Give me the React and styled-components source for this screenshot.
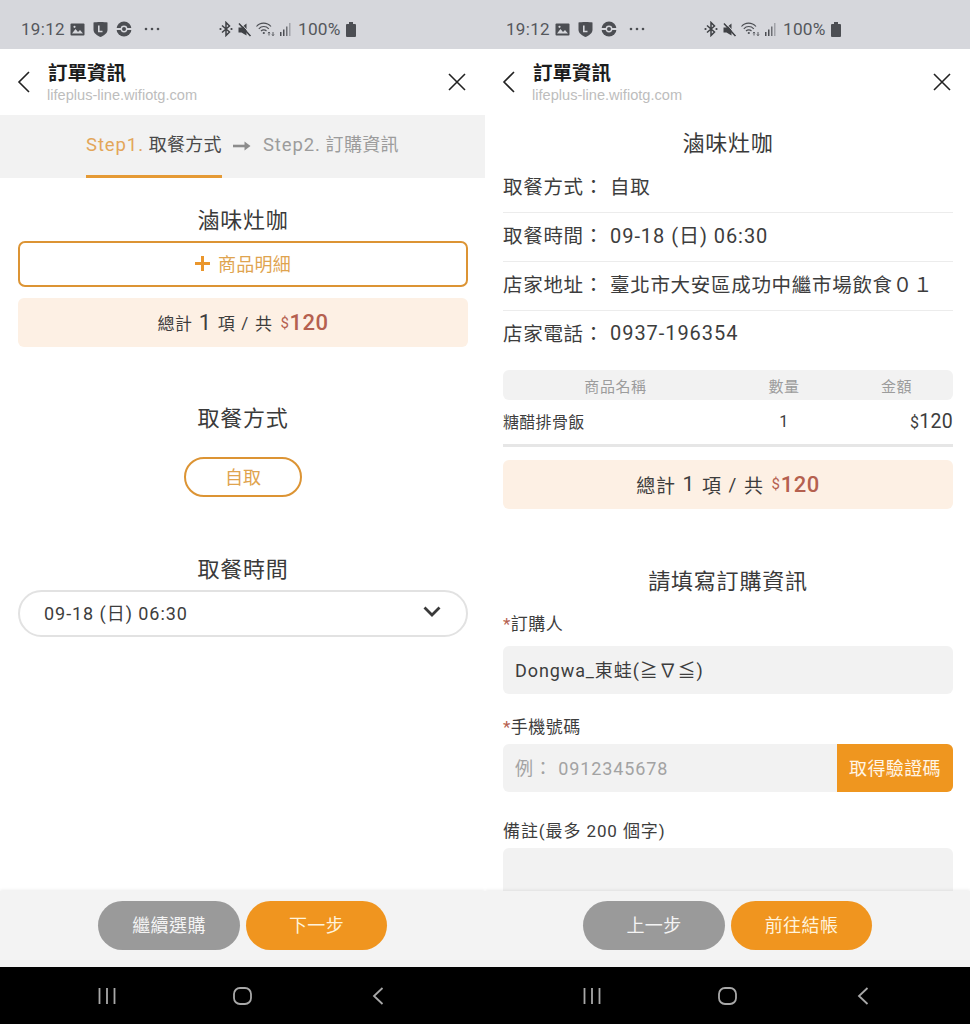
import React from 'react';
import styled, { createGlobalStyle } from 'styled-components';

const GlobalStyle = createGlobalStyle`
  html, body {
    margin: 0;
    padding: 0;
    background: #fff;
  }
  body {
    font-family: Roboto, "Noto Sans CJK TC", sans-serif;
    color: #333;
  }
  * {
    box-sizing: border-box;
  }
`;

const Screens = styled.div`
  display: flex;
  width: 970px;
  height: 1024px;
  overflow: hidden;
`;

const Phone = styled.div`
  width: 485px;
  height: 1024px;
  display: flex;
  flex-direction: column;
  background: #fff;
  overflow: hidden;
`;

const StatusBar = styled.div`
  height: 49px;
  flex: none;
  background: #d6d7dc;
  display: flex;
  align-items: center;
  padding: 9px 0 0 21px;
  color: #55575c;
`;

const Clock = styled.span`
  font-size: 17px;
  width: 49px;
  letter-spacing: 0.3px;
`;

const StatusLeft = styled.div`
  display: flex;
  align-items: center;
  gap: 8px;
  width: 149px;
  svg {
    display: block;
  }
`;

const StatusRight = styled.div`
  display: flex;
  align-items: center;
  gap: 4px;
  svg {
    display: block;
  }
`;

const Percent = styled.span`
  font-size: 17.3px;
  letter-spacing: 0.2px;
  margin-left: 2px;
`;

const Header = styled.div`
  height: 66px;
  flex: none;
  display: flex;
  align-items: center;
  padding: 0 19px 0 17px;
`;

const HeaderText = styled.div`
  flex: 1;
  margin-left: 18px;
  padding-top: 1px;
`;

const HeaderTitle = styled.div`
  font-size: 19.5px;
  line-height: 25px;
  font-weight: 700;
  color: #1c1c1c;
`;

const HeaderUrl = styled.div`
  font-family: "Liberation Sans", sans-serif;
  font-size: 14.6px;
  line-height: 19px;
  color: #bdbdbd;
  margin-left: -1px;
`;

const Steps = styled.div`
  height: 63px;
  flex: none;
  background: #f2f2f2;
  display: flex;
  padding-left: 86px;
`;

const Step = styled.div`
  height: 63px;
  padding-top: 18px;
  font-size: 18px;
  line-height: 24px;
  letter-spacing: 0.3px;
  white-space: nowrap;
  color: ${(p) => (p.$active ? '#4a4a4a' : '#9c9c9c')};
  border-bottom: ${(p) => (p.$active ? '3px solid #e59a35' : 'none')};
`;

const StepNo = styled.span`
  font-size: 18.5px;
  letter-spacing: 0.9px;
  color: ${(p) => (p.$active ? '#e3a65a' : '#9c9c9c')};
`;

const StepArrow = styled.svg`
  margin: 25px 12px 0 11px;
  flex: none;
`;

const Body = styled.div`
  flex: 1;
  min-height: 0;
  overflow: hidden;
  padding: 0 17px 0 18px;
  display: flex;
  flex-direction: column;
  > * {
    flex: none;
  }
`;

const Heading = styled.div`
  font-size: 22px;
  line-height: 30px;
  text-align: center;
  color: #3a3a3a;
  letter-spacing: 0.8px;
  margin-top: ${(p) => p.$top || 0}px;
`;

const DetailButton = styled.div`
  height: 46px;
  margin-top: 5px;
  padding-bottom: 2px;
  border: 2px solid #dc9434;
  border-radius: 7px;
  display: flex;
  align-items: center;
  justify-content: center;
  gap: 8px;
  font-size: 18px;
  letter-spacing: 0.2px;
  color: #dfa44f;
`;

const TotalBox = styled.div`
  height: 49px;
  margin-top: ${(p) => p.$top}px;
  padding-bottom: ${(p) => (p.$large ? 1 : 0)}px;
  background: #fdf0e4;
  border-radius: 6px;
  display: flex;
  align-items: center;
  justify-content: center;
  font-size: ${(p) => (p.$large ? 19 : 17)}px;
  letter-spacing: 0.6px;
  color: #3d3d3d;
`;

const TotalCount = styled.span`
  font-size: ${(p) => (p.$large ? 21 : 22)}px;
  margin: 0 ${(p) => (p.$large ? 7 : 6)}px;
`;

const Slash = styled.span`
  margin: 0 ${(p) => (p.$large ? 7 : 6)}px;
`;

const Currency = styled.span`
  margin-left: 8px;
  font-size: 15px;
  color: #b5604f;
`;

const Amount = styled.span`
  font-size: 22px;
  font-weight: 500;
  letter-spacing: 0.5px;
  color: #b5604f;
`;

const PillRow = styled.div`
  display: flex;
  justify-content: center;
  margin-top: 23px;
`;

const Pill = styled.div`
  width: 118px;
  height: 40px;
  padding-bottom: 3px;
  border: 2px solid #dc9434;
  border-radius: 20px;
  display: flex;
  align-items: center;
  justify-content: center;
  font-size: 18px;
  color: #dfa44f;
`;

const SelectBox = styled.div`
  height: 47px;
  margin-top: 5px;
  padding: 0 25px 4px 24px;
  border: 2px solid #e2e2e2;
  border-radius: 24px;
  display: flex;
  align-items: center;
  justify-content: space-between;
  font-size: 18px;
  letter-spacing: 0.95px;
  color: #3d3d3d;
`;

const InfoList = styled.div`
  margin-top: 5px;
`;

const InfoRow = styled.div`
  height: ${(p) => (p.$last ? 48 : 49)}px;
  padding-bottom: 5px;
  display: flex;
  align-items: center;
  font-size: 19.5px;
  letter-spacing: 0.7px;
  color: #3d3d3d;
  white-space: nowrap;
  border-bottom: ${(p) => (p.$last ? 'none' : '1px solid #ececec')};
`;

const InfoLabel = styled.span`
  width: 107px;
  flex: none;
`;

const InfoDigits = styled.span`
  font-size: 20px;
  letter-spacing: 0.95px;
`;

const TableHead = styled.div`
  height: 30px;
  margin-top: 11px;
  background: #f2f2f2;
  border-radius: 6px;
  display: grid;
  grid-template-columns: 225px 112px 1fr;
  align-items: center;
  font-size: 15px;
  letter-spacing: 0.6px;
  color: #9c9c9c;
  text-align: center;
`;

const TableRow = styled.div`
  height: 47px;
  padding-bottom: 2px;
  display: grid;
  grid-template-columns: 225px 112px 1fr;
  align-items: center;
  border-bottom: 3px solid #e6e6e6;
  font-size: 16px;
  letter-spacing: 0.3px;
  color: #3d3d3d;
`;

const CellCount = styled.span`
  text-align: center;
`;

const CellPrice = styled.span`
  text-align: right;
  font-size: 19.5px;
  small {
    font-size: 16px;
  }
`;

const FieldLabel = styled.div`
  font-size: 17px;
  line-height: 22px;
  letter-spacing: ${(p) => p.$spacing || 0.5}px;
  color: #3d3d3d;
  margin-top: ${(p) => p.$top}px;
`;

const Star = styled.span`
  color: #b5604f;
`;

const InputBox = styled.div`
  height: 48px;
  margin-top: ${(p) => p.$top}px;
  background: #f2f2f2;
  border-radius: 6px;
  display: flex;
  align-items: center;
  padding-left: 12px;
  font-size: 18px;
  letter-spacing: 0.9px;
  color: ${(p) => (p.$muted ? '#a3a3a3' : '#3d3d3d')};
  overflow: hidden;
`;

const InputText = styled.span`
  flex: 1;
  padding-bottom: 3px;
`;

const CodeButton = styled.div`
  width: 116px;
  height: 48px;
  padding-bottom: 2px;
  background: #ef961f;
  color: #fff5e6;
  font-size: 18px;
  letter-spacing: 0.4px;
  display: flex;
  align-items: center;
  justify-content: center;
`;

const TextArea = styled.div`
  height: 70px;
  margin-top: 6px;
  background: #f2f2f2;
  border-radius: 6px;
`;

const Footer = styled.div`
  height: 76px;
  flex: none;
  background: #f3f3f3;
  box-shadow: 0 -1px 3px rgba(0, 0, 0, 0.08);
  display: flex;
  justify-content: center;
  align-items: flex-start;
  gap: 6px;
  padding-top: 10px;
  position: relative;
`;

const FooterButton = styled.div`
  width: ${(p) => (p.$primary ? 141 : 142)}px;
  height: 49px;
  padding-bottom: 3px;
  border-radius: 25px;
  background: ${(p) => (p.$primary ? '#f0951f' : '#9a9a9a')};
  color: ${(p) => (p.$primary ? '#fff3dc' : '#f4f4f4')};
  font-size: 18px;
  letter-spacing: 0.4px;
  display: flex;
  align-items: center;
  justify-content: center;
`;

const NavBar = styled.div`
  height: 57px;
  flex: none;
  background: #000;
  display: flex;
  align-items: center;
  padding: 0 0 0 98px;
  svg {
    display: block;
  }
`;

const NavSlot = styled.div`
  width: ${(p) => p.$w}px;
  flex: none;
`;

const ImageIcon = () => (
  <svg width="15" height="13" viewBox="0 0 15 13">
    <rect x="0.5" y="0.5" width="14" height="12" rx="1" fill="#4c4e53" />
    <path d="M2 10.5 5.5 6l2.5 3 2-2 3 3.5z" fill="#d6d7dc" />
    <circle cx="4.5" cy="3.8" r="1.1" fill="#d6d7dc" />
  </svg>
);

const ShieldIcon = () => (
  <svg width="15" height="16" viewBox="0 0 15 16">
    <path d="M0.5 1.5C3 0.8 12 0.8 14.5 1.5V9c0 3-3.5 5.5-7 7-3.500-1.500-7-4-7-7z" fill="#4c4e53" />
    <path d="M5.8 4.500v6h3.700" fill="none" stroke="#d6d7dc" strokeWidth="1.6" />
  </svg>
);

const BallIcon = () => (
  <svg width="16" height="16" viewBox="0 0 16 16">
    <circle cx="8" cy="8" r="7.5" fill="#4c4e53" />
    <rect x="0" y="7" width="16" height="2" fill="#d6d7dc" />
    <circle cx="8" cy="8" r="3.400" fill="#d6d7dc" />
    <circle cx="8" cy="8" r="2" fill="#4c4e53" />
  </svg>
);

const DotsIcon = () => (
  <svg width="16" height="4" viewBox="0 0 16 4" style={{ marginLeft: 4 }}>
    <circle cx="2" cy="2" r="1.300" fill="#4c4e53" />
    <circle cx="8" cy="2" r="1.300" fill="#4c4e53" />
    <circle cx="14" cy="2" r="1.300" fill="#4c4e53" />
  </svg>
);

const BluetoothIcon = () => (
  <svg width="14" height="16" viewBox="0 0 14 16">
    <path d="M3 4.500 10.500 11 7 14.500v-13L10.500 5 3 11.500" fill="none" stroke="#3f4145" strokeWidth="1.500" />
    <circle cx="1.500" cy="8" r="1.100" fill="#3f4145" />
    <circle cx="12.500" cy="8" r="1.100" fill="#3f4145" />
  </svg>
);

const MuteIcon = () => (
  <svg width="15" height="15" viewBox="0 0 15 15">
    <path d="M1 5h3l5-4v12L4 10H1z" fill="#3f4145" transform="translate(0.5 0.500)" />
    <path d="M2 1.500 13.500 14" stroke="#3f4145" strokeWidth="1.600" />
    <path d="M3.200 0.500 14.500 13" stroke="#d6d7dc" strokeWidth="1" />
  </svg>
);

const WifiIcon = () => (
  <svg width="20" height="14" viewBox="0 0 20 14">
    <g fill="none" stroke="#4c4e53" strokeWidth="1.100">
      <path d="M0.500 4.500C4 0 11 0 15 4.500" />
      <path d="M2.800 6.800C5.500 3.800 10 3.800 12.800 6.800" />
      <path d="M5 9c1.500-1.500 4-1.500 5.500 0" />
    </g>
    <circle cx="7.800" cy="11" r="1.100" fill="#4c4e53" />
    <path d="M13 13.500v-3M12 11.200l1-1.200 1 1.200M17 10v3.500M16 12.500l1 1.200 1-1.200" fill="none" stroke="#4c4e53" strokeWidth="0.900" />
  </svg>
);

const SignalIcon = () => (
  <svg width="12" height="14" viewBox="0 0 12 14">
    <rect x="0" y="10" width="1.500" height="4" fill="#4c4e53" />
    <rect x="3" y="7.500" width="1.500" height="6.500" fill="#4c4e53" />
    <rect x="6" y="4.500" width="1.500" height="9.500" fill="#6d6f74" />
    <rect x="9" y="1" width="1.500" height="13" fill="#a2a4a9" />
  </svg>
);

const BatteryIcon = () => (
  <svg width="10" height="15" viewBox="0 0 10 15" style={{ marginLeft: 1 }}>
    <rect x="0" y="2" width="10" height="13" rx="1" fill="#4c4e53" />
    <rect x="3" y="0" width="4" height="2" fill="#4c4e53" />
  </svg>
);

const BackIcon = () => (
  <svg width="13" height="22" viewBox="0 0 13 22">
    <path d="M12 1 2 11l10 10" fill="none" stroke="#222" strokeWidth="1.600" />
  </svg>
);

const CloseIcon = () => (
  <svg width="18" height="18" viewBox="0 0 18 18">
    <path d="M1 1l16 16M17 1 1 17" fill="none" stroke="#222" strokeWidth="1.600" />
  </svg>
);

const Arrow = () => (
  <StepArrow width="18" height="12" viewBox="0 0 18 12">
    <path d="M0 6h13" stroke="#8c8c8c" strokeWidth="2.600" />
    <path d="M11.500 1.500 17.500 6l-6 4.500z" fill="#8c8c8c" />
  </StepArrow>
);

const PlusIcon = () => (
  <svg width="15" height="15" viewBox="0 0 15 15">
    <path d="M7.500 0v15M0 7.500h15" stroke="#ea962c" strokeWidth="3" />
  </svg>
);

const ChevronIcon = () => (
  <svg width="18" height="11" viewBox="0 0 18 11">
    <path d="M1.500 1.500 9 9l7.500-7.500" fill="none" stroke="#3a3a3a" strokeWidth="2.800" />
  </svg>
);

const StatusTop = () => (
  <StatusBar>
    <Clock>19:12</Clock>
    <StatusLeft>
      <ImageIcon />
      <ShieldIcon />
      <BallIcon />
      <DotsIcon />
    </StatusLeft>
    <StatusRight>
      <BluetoothIcon />
      <MuteIcon />
      <WifiIcon />
      <SignalIcon />
      <Percent>100%</Percent>
      <BatteryIcon />
    </StatusRight>
  </StatusBar>
);

const TitleBar = () => (
  <Header>
    <BackIcon />
    <HeaderText>
      <HeaderTitle>訂單資訊</HeaderTitle>
      <HeaderUrl>lifeplus-line.wifiotg.com</HeaderUrl>
    </HeaderText>
    <CloseIcon />
  </Header>
);

const BottomNav = () => (
  <NavBar>
    <NavSlot $w={135}>
      <svg width="18" height="18" viewBox="0 0 18 18">
        <path d="M1.500 1v16M9 1v16M16.500 1v16" stroke="#a8a8a8" strokeWidth="1.800" />
      </svg>
    </NavSlot>
    <NavSlot $w={139}>
      <svg width="19" height="18" viewBox="0 0 19 18">
        <rect x="1" y="1" width="17" height="16" rx="6" fill="none" stroke="#a8a8a8" strokeWidth="1.800" />
      </svg>
    </NavSlot>
    <NavSlot $w={12}>
      <svg width="12" height="18" viewBox="0 0 12 18">
        <path d="M10.500 1 2 9l8.500 8" fill="none" stroke="#a8a8a8" strokeWidth="1.800" />
      </svg>
    </NavSlot>
  </NavBar>
);

const Total = ({ large, top }) => (
  <TotalBox $large={large} $top={top}>
    總計
    <TotalCount $large={large}>1</TotalCount>項<Slash $large={large}>/</Slash>共
    <Currency>$</Currency>
    <Amount>120</Amount>
  </TotalBox>
);

const App = () => {
  return (
    <>
      <GlobalStyle />
      <Screens>
        <Phone>
          <StatusTop />
          <TitleBar />
          <Steps>
            <Step $active>
              <StepNo $active>Step1.</StepNo> 取餐方式
            </Step>
            <Arrow />
            <Step>
              <StepNo>Step2.</StepNo> 訂購資訊
            </Step>
          </Steps>
          <Body>
            <Heading $top={28}>滷味灶咖</Heading>
            <DetailButton>
              <PlusIcon />
              商品明細
            </DetailButton>
            <Total top={11} />
            <Heading $top={57}>取餐方式</Heading>
            <PillRow>
              <Pill>自取</Pill>
            </PillRow>
            <Heading $top={58}>取餐時間</Heading>
            <SelectBox>
              09-18 (日) 06:30
              <ChevronIcon />
            </SelectBox>
          </Body>
          <Footer>
            <FooterButton>繼續選購</FooterButton>
            <FooterButton $primary>下一步</FooterButton>
          </Footer>
          <BottomNav />
        </Phone>

        <Phone>
          <StatusTop />
          <TitleBar />
          <Body>
            <Heading $top={14}>滷味灶咖</Heading>
            <InfoList>
              <InfoRow>
                <InfoLabel>取餐方式：</InfoLabel>自取
              </InfoRow>
              <InfoRow>
                <InfoLabel>取餐時間：</InfoLabel>
                <InfoDigits>09-18 (日) 06:30</InfoDigits>
              </InfoRow>
              <InfoRow>
                <InfoLabel>店家地址：</InfoLabel>臺北市大安區成功中繼市場飲食０１
              </InfoRow>
              <InfoRow $last>
                <InfoLabel>店家電話：</InfoLabel>
                <InfoDigits>0937-196354</InfoDigits>
              </InfoRow>
            </InfoList>
            <TableHead>
              <span>商品名稱</span>
              <span>數量</span>
              <span>金額</span>
            </TableHead>
            <TableRow>
              <span>糖醋排骨飯</span>
              <CellCount>1</CellCount>
              <CellPrice>
                <small>$</small>120
              </CellPrice>
            </TableRow>
            <Total large top={13} />
            <Heading $top={58}>請填寫訂購資訊</Heading>
            <FieldLabel $top={16}>
              <Star>*</Star>訂購人
            </FieldLabel>
            <InputBox $top={11}>
              <InputText>Dongwa_東蛙(≧∇≦)</InputText>
            </InputBox>
            <FieldLabel $top={22}>
              <Star>*</Star>手機號碼
            </FieldLabel>
            <InputBox $top={6} $muted>
              <InputText>例： 0912345678</InputText>
              <CodeButton>取得驗證碼</CodeButton>
            </InputBox>
            <FieldLabel $top={28} $spacing={0.9}>
              備註(最多 200 個字)
            </FieldLabel>
            <TextArea />
          </Body>
          <Footer>
            <FooterButton>上一步</FooterButton>
            <FooterButton $primary>前往結帳</FooterButton>
          </Footer>
          <BottomNav />
        </Phone>
      </Screens>
    </>
  );
};

export default App;
